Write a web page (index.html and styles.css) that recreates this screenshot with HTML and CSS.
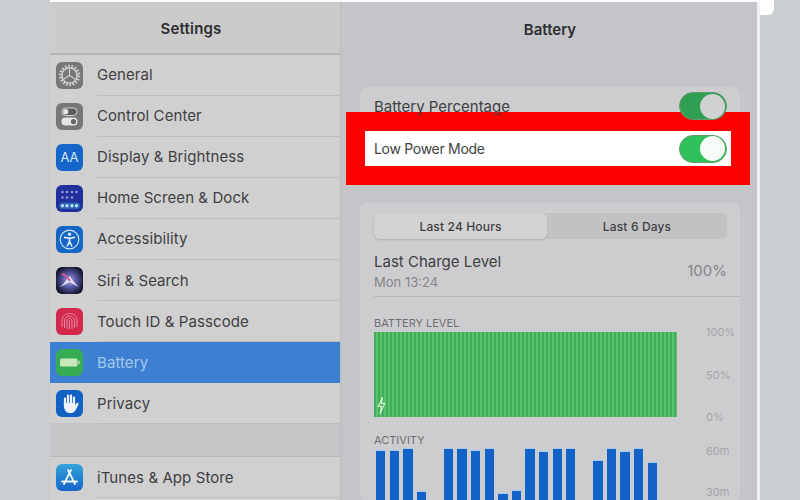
FILE: index.html
```html
<!DOCTYPE html>
<html lang="en">

<head>
    <meta charset="UTF-8">
    <title>Battery settings</title>
    <link rel="stylesheet" href="styles.css">
</head>

<body>
    <div class="tablet">
        <div class="sidebar">
            <div class="sidebarheader">Settings</div>
            <div class="row">
                <svg class="icon" viewBox="0 0 27 27">
                    <rect width="27" height="27" rx="6" fill="#77777a" />
                    <circle cx="13.5" cy="13.5" r="9" fill="none" stroke="#c9c9c9" stroke-width="3.4" stroke-dasharray="1.7 1.44" />
                    <circle cx="13.5" cy="13.5" r="7.6" fill="none" stroke="#d6d6d6" stroke-width="1.4" />
                    <path d="M13.5 13.5V7M13.5 13.5L8 17M13.5 13.5L19 17" stroke="#d0d0d0" stroke-width="1.1" fill="none" />
                </svg>
                <div class="rowtext">General</div>
            </div>
            <div class="row">
                <svg class="icon" viewBox="0 0 27 27">
                    <rect width="27" height="27" rx="6" fill="#77777a" />
                    <rect x="6" y="5" width="15" height="7.5" rx="3.7" fill="#5b5b5e" stroke="#d8d8d8" stroke-width="1" />
                    <circle cx="9.7" cy="8.7" r="2.6" fill="#e4e4e4" />
                    <rect x="5.5" y="14.5" width="16" height="8" rx="4" fill="#e4e4e4" />
                    <circle cx="17.5" cy="18.5" r="2.6" fill="#66666a" />
                </svg>
                <div class="rowtext">Control Center</div>
            </div>
            <div class="row">
                <div class="icon aaicon">AA</div>
                <div class="rowtext">Display &amp; Brightness</div>
            </div>
            <div class="row">
                <svg class="icon" viewBox="0 0 27 27">
                    <rect width="27" height="27" rx="6" fill="#1f2f9c" />
                    <rect x="3" y="17.5" width="21" height="6.5" rx="3" fill="#2b62b4" />
                    <g fill="#9d94dc">
                        <circle cx="6.5" cy="7" r="1.3" />
                        <circle cx="11" cy="7" r="1.3" />
                        <circle cx="16" cy="7" r="1.3" />
                        <circle cx="20.5" cy="7" r="1.3" />
                        <circle cx="6.5" cy="12.5" r="1.3" />
                        <circle cx="11" cy="12.5" r="1.3" />
                        <circle cx="16" cy="12.5" r="1.3" />
                    </g>
                    <g fill="#b9dcf2">
                        <circle cx="6.5" cy="20.7" r="1.7" />
                        <circle cx="11" cy="20.7" r="1.7" />
                        <circle cx="16" cy="20.7" r="1.7" />
                        <circle cx="20.5" cy="20.7" r="1.7" />
                    </g>
                </svg>
                <div class="rowtext">Home Screen &amp; Dock</div>
            </div>
            <div class="row">
                <svg class="icon" viewBox="0 0 27 27">
                    <rect width="27" height="27" rx="6" fill="#1566c4" />
                    <circle cx="13.5" cy="13.5" r="9.3" fill="none" stroke="#cfe3f7" stroke-width="1.2" />
                    <circle cx="13.5" cy="8.2" r="1.6" fill="#e6f0fa" />
                    <path d="M8 11.2L13.5 12.4L19 11.2M13.5 12.4V15.5M13.5 15.5L11 20.5M13.5 15.5L16 20.5" fill="none" stroke="#e6f0fa" stroke-width="1.6" />
                </svg>
                <div class="rowtext">Accessibility</div>
            </div>
            <div class="row">
                <svg class="icon" viewBox="0 0 27 27">
                    <defs>
                        <radialGradient id="siriglow" cx="0.5" cy="0.5" r="0.55">
                            <stop offset="0" stop-color="#b9a3d8" />
                            <stop offset="0.45" stop-color="#5a5aa8" />
                            <stop offset="1" stop-color="#14142c" />
                        </radialGradient>
                    </defs>
                    <rect width="27" height="27" rx="6" fill="url(#siriglow)" />
                    <path d="M4 20C9 16 11 12 13.5 9C16 12 18 16 23 20C18 18 16 16 13.5 15C11 16 9 18 4 20Z" fill="#dfe6f2" />
                    <path d="M6 7C10 8 12 11 14 14" stroke="#d05a9c" stroke-width="2" fill="none" />
                </svg>
                <div class="rowtext">Siri &amp; Search</div>
            </div>
            <div class="row">
                <svg class="icon" viewBox="0 0 27 27">
                    <rect width="27" height="27" rx="6" fill="#d3294f" />
                    <g fill="none" stroke="#e78a9e" stroke-width="1">
                        <path d="M6 19V13C6 3 21 3 21 13V19" />
                        <path d="M8.5 20V13C8.5 6.5 18.5 6.5 18.5 13V20" />
                        <path d="M11 21V13C11 9.5 16 9.5 16 13V21" />
                        <path d="M13.5 21V12.5" />
                    </g>
                </svg>
                <div class="rowtext">Touch ID &amp; Passcode</div>
            </div>
            <div class="row rowselected">
                <svg class="icon" viewBox="0 0 27 27">
                    <rect width="27" height="27" rx="6" fill="#36ab54" />
                    <rect x="4" y="9.5" width="17.5" height="8" rx="1.5" fill="#c7e8ba" />
                    <rect x="22" y="11.5" width="1.8" height="4" rx="0.8" fill="#a4d8a0" />
                </svg>
                <div class="rowtext">Battery</div>
            </div>
            <div class="row">
                <svg class="icon" viewBox="0 0 27 27">
                    <rect width="27" height="27" rx="6" fill="#1262c4" />
                    <path d="M9 15V8.5M12 14V5.5M15 14V5.5M18 14V7.5" stroke="#eef3fa" stroke-width="2.2" stroke-linecap="round" fill="none" />
                    <path d="M7.9 13H19.1V15.5C20 13.5 21 12.5 22.3 13C23 13.5 22.3 15 21.7 16C20.5 18 20 20 18.5 21.5C16.5 23.5 12 23.5 10 21.5C8.5 20 7.9 18 7.9 15Z" fill="#eef3fa" />
                </svg>
                <div class="rowtext">Privacy</div>
            </div>
            <div class="sidebargap"></div>
            <div class="row">
                <svg class="icon" viewBox="0 0 27 27">
                    <defs>
                        <linearGradient id="storeblue" x1="0" y1="0" x2="0" y2="1">
                            <stop offset="0" stop-color="#35a4dc" />
                            <stop offset="1" stop-color="#1565c8" />
                        </linearGradient>
                    </defs>
                    <rect width="27" height="27" rx="6" fill="url(#storeblue)" />
                    <path d="M15 6L8 20M12 6L19 20M6 17.5H21" stroke="#eef6fc" stroke-width="1.8" stroke-linecap="round" fill="none" />
                </svg>
                <div class="rowtext">iTunes &amp; App Store</div>
            </div>
        </div>

        <div class="detail">
            <div class="detailheader">Battery</div>
            <div class="card cardtoggles">
                <div class="togglerow">
                    <div>Battery Percentage</div>
                    <div class="toggle toggledim"><div class="knob"></div></div>
                </div>
                <div class="togglerow highlighted">
                    <div>Low Power Mode</div>
                    <div class="toggle"><div class="knob"></div></div>
                </div>
            </div>

            <div class="card cardusage">
                <div class="segment">
                    <div class="segmentitem segmentactive">Last 24 Hours</div>
                    <div class="segmentitem segmentother">Last 6 Days</div>
                </div>
                <div class="chargerow">
                    <div>
                        <div class="chargetitle">Last Charge Level</div>
                        <div class="chargetime">Mon 13:24</div>
                    </div>
                    <div class="chargevalue">100%</div>
                </div>
                <div class="charttitle batterytitle">BATTERY LEVEL</div>
                <div class="chartrow">
                    <div class="levelchart">
                        <svg class="boltmark" viewBox="0 0 8 16">
                            <path d="M5 0L1 9H4L2.5 16L7 6H4Z" fill="none" stroke="#d9f5d4" stroke-width="1" />
                        </svg>
                    </div>
                    <div class="axis">
                        <div>100%</div>
                        <div>50%</div>
                        <div>0%</div>
                    </div>
                </div>
                <div class="charttitle activitytitle">ACTIVITY</div>
                <div class="chartrow">
                    <div class="bars">
                        <div class="bar" style="height: 81px"></div>
                        <div class="bar" style="height: 81px"></div>
                        <div class="bar" style="height: 83px"></div>
                        <div class="bar" style="height: 40px"></div>
                        <div class="bar" style="height: 0"></div>
                        <div class="bar" style="height: 83px"></div>
                        <div class="bar" style="height: 83px"></div>
                        <div class="bar" style="height: 81px"></div>
                        <div class="bar" style="height: 83px"></div>
                        <div class="bar" style="height: 38px"></div>
                        <div class="bar" style="height: 41px"></div>
                        <div class="bar" style="height: 83px"></div>
                        <div class="bar" style="height: 80px"></div>
                        <div class="bar" style="height: 83px"></div>
                        <div class="bar" style="height: 83px"></div>
                        <div class="bar" style="height: 0"></div>
                        <div class="bar" style="height: 71px"></div>
                        <div class="bar" style="height: 83px"></div>
                        <div class="bar" style="height: 80px"></div>
                        <div class="bar" style="height: 83px"></div>
                        <div class="bar" style="height: 69px"></div>
                    </div>
                    <div class="axis axisactivity">
                        <div>60m</div>
                        <div>30m</div>
                    </div>
                </div>
            </div>
        </div>
    </div>
    <div class="cornerglow"></div>
</body>

</html>
```

FILE: styles.css
```css
* {
    margin: 0;
    padding: 0;
    box-sizing: border-box;
}

body {
    width: 800px;
    height: 500px;
    overflow: hidden;
    padding-left: 50px;
    background-color: #c9ced1;
    font-family: Inter, "Liberation Sans", sans-serif;
    color: #3f3f42;
}

.tablet {
    width: 710px;
    height: 500px;
    display: flex;
    overflow: hidden;
    border-top: 2px solid #fbfbfb;
    border-right: 3px solid #f0f1f2;
}

.sidebar {
    width: 291px;
    flex-shrink: 0;
    background-color: #d0d0d0;
    border-right: 1px solid #bcbcbc;
}

.sidebarheader {
    height: 52.5px;
    display: flex;
    align-items: center;
    justify-content: center;
    padding: 3px 8px 0 0;
    background-color: #cbcbcc;
    border-bottom: 2px solid #b5b5b7;
    font-size: 15px;
    font-weight: 600;
    letter-spacing: 0.2px;
    color: #2e2e30;
}

.row {
    height: 41.1px;
    display: flex;
    align-items: center;
    padding-left: 6px;
}

.icon {
    width: 27px;
    height: 27px;
    flex-shrink: 0;
}

.aaicon {
    display: flex;
    align-items: center;
    justify-content: center;
    border-radius: 6px;
    background-color: #1566c8;
    color: #d7e7f8;
    font-size: 13px;
}

.rowtext {
    height: 100%;
    flex-grow: 1;
    display: flex;
    align-items: center;
    margin-left: 14px;
    border-bottom: 1px solid #bdbdbd;
    font-size: 15px;
    letter-spacing: 0.08px;
}

.rowselected {
    background-color: #3d7fd0;
    color: #a3c9ee;
}

.rowselected .rowtext {
    border-bottom: none;
}

.sidebargap {
    height: 34px;
    margin-top: -1px;
    background-color: #c6c6c8;
    border-bottom: 1px solid #b9b9bb;
}

.detail {
    width: 416px;
    flex-shrink: 0;
    padding: 0 17px 0 19px;
    background-color: #c4c5c9;
}

.detailheader {
    height: 54px;
    display: flex;
    align-items: center;
    justify-content: center;
    font-size: 15px;
    font-weight: 600;
    color: #2e2e30;
}

.card {
    background-color: #cdcdcf;
    border-radius: 8px;
    padding-left: 14px;
    padding-right: 13px;
}

.cardtoggles {
    margin-top: 31px;
    padding-bottom: 5px;
}

.togglerow {
    display: flex;
    align-items: center;
    justify-content: space-between;
    height: 38px;
    margin-bottom: 6px;
    font-size: 15px;
}

.highlighted {
    height: 35px;
    margin: 0 -4px 0 -9px;
    padding: 0 4px 0 9px;
    background-color: #ffffff;
    box-shadow: 0 0 0 19px #fd0000;
    font-size: 14px;
    letter-spacing: -0.3px;
}

.toggle {
    width: 48px;
    height: 28px;
    display: flex;
    justify-content: flex-end;
    align-items: center;
    padding-right: 1px;
    border-radius: 14px;
    background-color: #2fc15a;
    border: 1px solid #5e9a70;
}

.toggledim {
    background-color: #2f9f52;
}

.knob {
    width: 25px;
    height: 25px;
    border-radius: 50%;
    background-color: #f7fbf7;
}

.toggledim .knob {
    background-color: #cfd2d1;
}

.cardusage {
    margin-top: 31px;
    padding-top: 11px;
    height: 300px;
}

.segment {
    height: 26px;
    display: flex;
    border-radius: 6px;
    background-color: #c2c2c4;
    font-size: 12px;
    font-weight: 500;
    letter-spacing: 0.15px;
}

.segmentitem {
    display: flex;
    align-items: center;
    justify-content: center;
}

.segmentactive {
    width: 173px;
    border-radius: 6px;
    background-color: #d2d2d2;
    box-shadow: 0 1px 2px #adadb0;
}

.segmentother {
    flex-grow: 1;
}

.chargerow {
    height: 58px;
    display: flex;
    align-items: center;
    justify-content: space-between;
    margin-right: -13px;
    padding-right: 13px;
    border-bottom: 1px solid #b8b8bb;
}

.chargetitle {
    font-size: 15px;
    margin-top: 6px;
}

.chargetime {
    font-size: 13px;
    margin-top: 3px;
    color: #85858a;
}

.chargevalue {
    font-size: 15px;
    margin-top: 6px;
    color: #85858a;
}

.charttitle {
    height: 14px;
    line-height: 14px;
    font-size: 11px;
    color: #6e6e72;
}

.batterytitle {
    margin-top: 19px;
}

.activitytitle {
    margin-top: 9px;
}

.chartrow {
    display: flex;
    margin-top: 2px;
}

.levelchart {
    width: 303px;
    height: 85px;
    padding-left: 3px;
    padding-top: 65px;
    flex-shrink: 0;
    background: repeating-linear-gradient(90deg, #3fae5a 0, #3fae5a 2px, #7ad680 3px, #3fae5a 4px);
}

.boltmark {
    display: block;
    width: 9px;
    height: 17px;
}

.axis {
    height: 99px;
    margin-top: -7px;
    margin-left: 29px;
    display: flex;
    flex-direction: column;
    justify-content: space-between;
    font-size: 11px;
    line-height: 14px;
    color: #a5a5a9;
}

.axisactivity {
    height: 55px;
    margin-top: -5px;
}

.bars {
    width: 303px;
    height: 83px;
    flex-shrink: 0;
    display: flex;
    align-items: flex-end;
    gap: 4.2px;
    padding-left: 2px;
}

.bar {
    width: 9.4px;
    flex-shrink: 0;
    background-color: #1262c8;
    box-shadow: 0 -1px 1px #a6c9ef;
}

.cornerglow {
    position: absolute;
    left: 760px;
    top: 0;
    width: 14px;
    height: 15px;
    background-color: #ffffff;
    border-bottom-right-radius: 6px;
}
```
